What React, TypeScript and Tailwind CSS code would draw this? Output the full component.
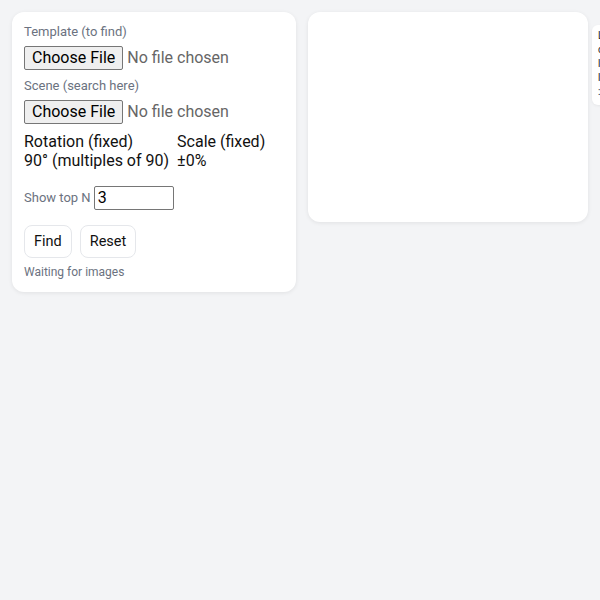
import React from "react";

const fileCls =
  "h-[24px] w-[260px] text-[16px] leading-[20px] text-[#666] file:mr-[4px] file:h-[24px] file:rounded-[2px] file:border file:border-solid file:border-[#767676] file:bg-[#efefef] file:px-[7px] file:text-[16px] file:text-black";

export default function App() {
  return (
    <div
      className="min-h-[600px] w-[600px] overflow-hidden bg-[#f3f4f6] p-3 text-[#111827]"
      style={{ fontFamily: "Roboto, 'Liberation Sans', sans-serif" }}
    >
      <div className="flex items-start gap-3">
        <div className="flex w-[284px] shrink-0 flex-col rounded-xl bg-white p-3 shadow-[0_1px_4px_rgba(0,0,0,0.08)]">
          <label className="text-[13px] leading-[16px] text-[#6b7280]">Template (to find)</label>
          <input type="file" className={"mt-[6px] " + fileCls} style={{ fontFamily: "Roboto, 'Liberation Sans', sans-serif" }} />
          <label className="mt-[8px] text-[13px] leading-[16px] text-[#6b7280]">Scene (search here)</label>
          <input type="file" className={"mt-[6px] " + fileCls} style={{ fontFamily: "Roboto, 'Liberation Sans', sans-serif" }} />
          <div className="mt-[8px] flex gap-2 text-[16px] leading-[19px] text-[#111]">
            <div className="flex flex-col">
              <span>Rotation (fixed)</span>
              <span>90° (multiples of 90)</span>
            </div>
            <div className="flex flex-col">
              <span>Scale (fixed)</span>
              <span>±0%</span>
            </div>
          </div>
          <div className="mt-[16px] flex items-center gap-[3px]">
            <span className="text-[13px] text-[#6b7280]">Show top N</span>
            <input
              type="number"
              defaultValue={3}
              className="h-[24px] w-[80px] rounded-[2px] border border-[#767676] px-[3px] text-[16px] text-black"
            />
          </div>
          <div className="mt-[15px] flex gap-2">
            <button className="h-[33px] rounded-lg border border-[#e5e7eb] bg-white px-[9px] text-[14.5px] text-[#111]">
              Find
            </button>
            <button className="h-[33px] rounded-lg border border-[#e5e7eb] bg-white px-[9px] text-[14.5px] text-[#111]">
              Reset
            </button>
          </div>
          <div className="mt-[6px] text-[12px] leading-[16px] text-[#6b7280]">Waiting for images</div>
        </div>
        <div className="h-[210px] w-[280px] shrink-0 rounded-xl bg-white shadow-[0_1px_4px_rgba(0,0,0,0.08)]"></div>
        <div className="-ml-2 mt-[13px] flex h-[80px] w-[120px] shrink-0 flex-col gap-[3px] rounded-md bg-white px-[6px] py-[5px] text-[10px] leading-[11px] text-[#222] shadow-[0_1px_3px_rgba(0,0,0,0.06)]">
          <span>Legend</span>
          <span>o match</span>
          <span>l best</span>
          <span>l other</span>
          <span>: info</span>
        </div>
      </div>
    </div>
  );
}
